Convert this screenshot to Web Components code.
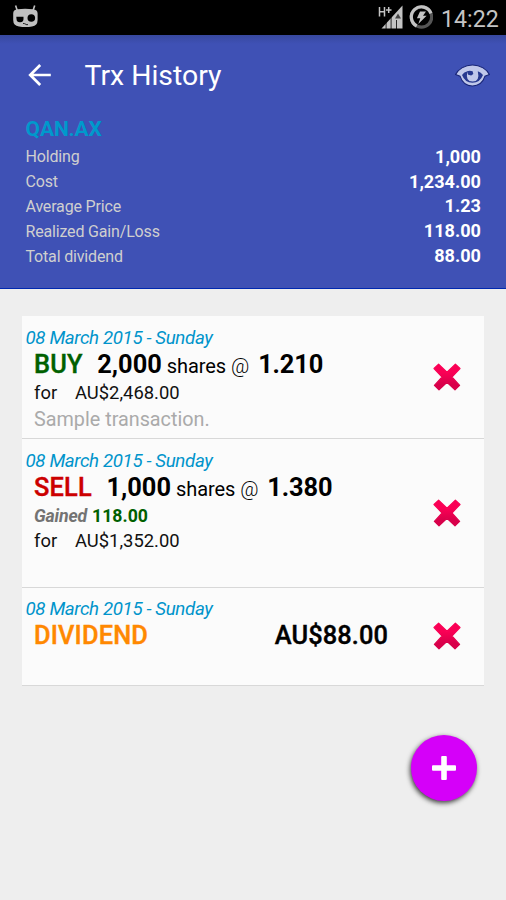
<!DOCTYPE html>
<html lang="en">
<head>
<meta charset="utf-8">
<title>Trx History</title>
<style>
html,body{margin:0;height:100%}
body{background:#eee;font-family:Roboto,"Liberation Sans",sans-serif;overflow:hidden}
</style>
</head>
<body>
<trx-app></trx-app>
<script>
const define=(name,html,setup)=>customElements.define(name,class extends HTMLElement{
  connectedCallback(){
    if(this.shadowRoot)return;
    this.attachShadow({mode:"open"}).innerHTML=html;
    if(setup)setup(this,this.shadowRoot);
  }
});

define("status-bar",`<style>
:host{display:flex;height:35px;background:#000;color:#c4c4c4;align-items:center;box-sizing:border-box;padding:0 8px 0 12px}
.sp{flex:1}svg{display:block}
time{font-size:23.2px;line-height:35px;padding:2px 0 0 8px;width:57px;white-space:nowrap;height:33px}
</style>
<svg width="27" height="35" viewBox="0 0 27 35"><path d="M3.6 5.5l2 6M22.7 5.5l-2 6" stroke="#c0c0c0" stroke-width="1.6"/><path d="M1.2 13.5Q1.2 9.5 5.5 9.2Q13 8.4 21 9.2Q25.6 9.5 25.6 13.5V20Q25.6 25.6 20 26.5Q13.5 27.5 7 26.5Q1.2 25.6 1.2 20Z" fill="#c0c0c0"/><path d="M4.3 16.7H11.5V18.5A3.5 3.5 0 0 1 4.5 19Z" fill="#000"/><circle cx="19.3" cy="18" r="3.8" fill="#000"/><path d="M11 23.4q2 .1 3 1t2 0" stroke="#222" fill="none"/></svg>
<span class="sp"></span>
<svg width="56" height="35" viewBox="376.5 0 56 35"><path d="M379 7v9.5M384 7v9.5M379 11.7h5M385.5 10h5.5M388.2 7v6" stroke="#c4c4c4" stroke-width="1.5" fill="none"/><path d="M381 28.5L402 5.5V28.5Z" fill="#c4c4c4"/><path d="M385.6 18v11M390.6 14v15M396 20v9" stroke="#000" stroke-width=".8"/><path d="M394.5 18.5l3-5 3 5Z" fill="#444"/><circle cx="421" cy="17" r="10.2" fill="none" stroke="#555" stroke-width="3.2"/><path d="M416.2 26A10.2 10.2 0 1 1 430.5 13.3" fill="none" stroke="#c4c4c4" stroke-width="3.2"/><path d="M419.5 11.5h6l-3 4.2h3.6L417.8 24l2-5.8h-3.4Z" fill="#c4c4c4"/></svg>
<time>14:22</time>`);

define("tool-bar",`<style>
:host{display:flex;height:79px;align-items:center;box-sizing:border-box;padding:0 15px 0 27px;color:#fff}
svg{display:block}h1{flex:1;margin:2px 0 0 32.5px;font-size:28.4px;font-weight:400;line-height:36px;white-space:nowrap}
</style>
<svg width="25" height="24" viewBox="0 0 25 24"><path d="M2.5 12H23.8M13.2 2L3.2 12L13.2 22" fill="none" stroke="#fff" stroke-width="2.7"/></svg>
<h1><slot></slot></h1>
<svg width="37" height="26" viewBox="0 0 37 26"><path d="M6 14.2C8 20.5 13 24 18.4 24C24 24 29 20.5 31 14.2L35.4 12.5C33 7.5 26.5 3 18.5 3S4 7.5 1.6 12.5Z" fill="#c0c8ea" stroke="#172477" stroke-width="1.1"/><path d="M8 13Q10 10 13.5 9.2Q11 19.5 18.6 19.5T23.8 9.2Q27 10.2 29 13Q26 20.8 18.4 20.8Q11 20.8 8 13Z" fill="#26388f"/><path d="M13 9.3Q15.5 8.2 18.6 9.2L19.3 12L17.2 13.6L14.2 12.8" fill="#26388f"/></svg>`);

define("stat-row",`<style>
:host{display:flex;justify-content:space-between;height:24.85px;line-height:24.85px;font-size:16px;color:#cfcfcf;white-space:nowrap}
b{font-size:18.1px;color:#fff;font-weight:700}
.l{padding-top:.5px;letter-spacing:-.17px}
</style><span class="l"></span><b></b>`,(e,r)=>{
  r.querySelector("span").textContent=e.getAttribute("label");
  r.querySelector("b").textContent=e.getAttribute("value");
});

define("stock-header",`<style>
:host{display:block;height:254px;box-sizing:border-box;border-bottom:1px solid #0028b0;background:linear-gradient(#37489f,#3f51b5 9px)}
.stats{padding:2px 25px 0 25.5px}
h2{margin:0;font-size:21px;line-height:26px;height:28.8px;font-weight:700;color:#0099cc;letter-spacing:-.1px}
</style>
<tool-bar>Trx History</tool-bar>
<div class="stats"><h2>QAN.AX</h2>
<stat-row label="Holding" value="1,000"></stat-row>
<stat-row label="Cost" value="1,234.00"></stat-row>
<stat-row label="Average Price" value="1.23"></stat-row>
<stat-row label="Realized Gain/Loss" value="118.00"></stat-row>
<stat-row label="Total dividend" value="88.00"></stat-row></div>`);

define("delete-button",`<style>:host{display:block;width:30px;height:30px}svg{display:block}</style>
<svg width="30" height="30" viewBox="0 0 30 30"><defs><linearGradient id="g" gradientUnits="userSpaceOnUse" x1="0" y1="0" x2="0" y2="30"><stop offset=".35" stop-color="#fa0055"/><stop offset=".75" stop-color="#d8004a"/></linearGradient></defs><path d="M2 6.5L6.6 2.2L15 10.2L23.4 2.2L28 6.5L19.9 15L27.6 23.4L23 27.8L15 20.3L7 27.8L2.4 23.4L10.1 15Z" fill="url(#g)" stroke="url(#g)" stroke-width="1.2" stroke-linejoin="round"/></svg>`);

define("trx-item",`<style>
:host{display:grid;grid-template-columns:1fr 30px;padding:0 21.5px 0 3.5px;box-sizing:border-box;background:#fbfbfb;border-bottom:1px solid #d8d8d8;align-items:center}
.date{font-size:18.7px;line-height:22px;height:22px;letter-spacing:-.36px;font-style:italic;color:#0094cb;white-space:nowrap}
.body{align-self:start;padding-top:10.5px}
.lines{padding-left:8.5px}
</style>
<div class="body"><div class="date"></div><div class="lines"><slot></slot></div></div><delete-button></delete-button>`,(e,r)=>{
  r.querySelector(".date").textContent=e.getAttribute("date");
});

define("trx-trade",`<style>
:host{display:flex;align-items:baseline;height:31px;line-height:30px;font-size:20px;color:#000;white-space:nowrap}
b{font-size:25.4px;font-weight:700}
.kind{color:var(--kind);font-weight:500;-webkit-text-stroke:.4px;letter-spacing:.2px}
.q{margin-left:14.5px}.s{margin-left:5px;letter-spacing:-.08px}.p{margin-left:9px;letter-spacing:-.1px}
.at{font-weight:300}
</style><b class="kind"></b><b class="q"></b><span class="s">shares <span class="at">@</span></span><b class="p"></b>`,(e,r)=>{
  r.querySelector(".kind").textContent=e.getAttribute("kind");
  r.querySelector(".q").textContent=e.getAttribute("shares");
  r.querySelector(".p").textContent=e.getAttribute("price");
});

define("trx-total",`<style>:host{display:flex;font-size:18.4px;height:25px;line-height:25px;color:#111}span{width:41px}</style><span>for</span><slot></slot>`);
define("trx-note",`<style>:host{display:block;font-size:19.8px;height:26px;line-height:29px;color:#aaa}</style><slot></slot>`);
define("trx-gain",`<style>:host{display:flex;gap:5px;font-size:17.7px;height:25px;line-height:27px;font-weight:700;color:#006000}i{color:#737373;letter-spacing:-.15px}</style><i>Gained</i><slot></slot>`);
define("trx-dividend",`<style>:host{display:flex;justify-content:space-between;font-size:25.4px;height:30px;line-height:30px;font-weight:500;padding-right:44px}span{color:#ff8800;-webkit-text-stroke:.4px;letter-spacing:.15px}b{font-weight:500;color:#000;-webkit-text-stroke:.4px;letter-spacing:.1px}</style><span>DIVIDEND</span><b><slot></slot></b>`);

define("fab-button",`<style>:host{display:grid;place-items:center;width:66px;height:66px;border-radius:50%;background:#d500f9;box-shadow:-1px 2px 5px rgba(0,0,0,.75)}svg{display:block}</style>
<svg width="26" height="26" viewBox="0 0 26 26" fill="#fff"><rect x="10.2" y="1" width="5.6" height="24" rx="1"/><rect x="1" y="10.2" width="24" height="5.6" rx="1"/></svg>`);

define("trx-app",`<style>
:host{display:flex;flex-direction:column;width:506px;height:900px;background:#eee}
main{display:flex;flex-direction:column;margin:27px 22.5px 0 22px}
.buy{height:123px}.sell{height:148.5px}.div{height:98px}
.sell trx-gain{padding-top:.5px}
footer{display:flex;justify-content:flex-end;padding:49.5px 29px 0 0}
</style>
<status-bar></status-bar><stock-header></stock-header>
<main>
<trx-item class="buy" date="08 March 2015 - Sunday"><trx-trade kind="BUY" shares="2,000" price="1.210" style="--kind:#006000"></trx-trade><trx-total>AU$2,468.00</trx-total><trx-note>Sample transaction.</trx-note></trx-item>
<trx-item class="sell" date="08 March 2015 - Sunday"><trx-trade kind="SELL" shares="1,000" price="1.380" style="--kind:#cc0000"></trx-trade><trx-gain>118.00</trx-gain><trx-total>AU$1,352.00</trx-total></trx-item>
<trx-item class="div" date="08 March 2015 - Sunday"><trx-dividend>AU$88.00</trx-dividend></trx-item>
</main>
<footer><fab-button></fab-button></footer>`);
</script>
</body>
</html>
